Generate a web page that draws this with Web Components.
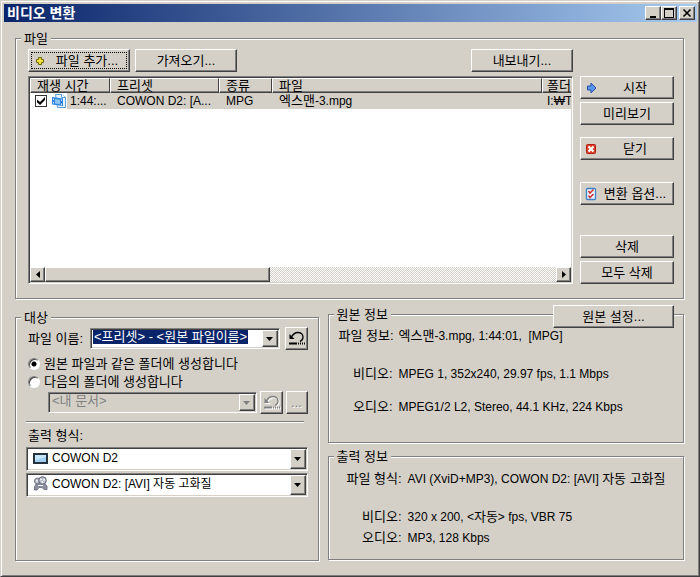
<!DOCTYPE html>
<html lang="ko">
<head>
<meta charset="utf-8">
<title>비디오 변환</title>
<style>
  :root {
    --face: #d4d0c8; --shade: #808080; --dark: #404040; --light: #fff; --navy: #0a246a;
  }
  body { margin: 0; background: var(--face); color: #000; font: 13px/16px "Liberation Sans", "Noto Sans CJK KR", sans-serif; }
</style>
</head>
<body>
<convert-window></convert-window>

<template id="t-window">
  <style>
    :host { display: flex; flex-direction: column; box-sizing: border-box; min-height: 100vh; padding: 2px 0 0 2px;
      border: 1px solid; border-color: var(--face) var(--dark) var(--dark) var(--face);
      box-shadow: inset 1px 1px 0 #fff, inset -1px -1px 0 var(--shade); }
    main { flex: 1; display: flex; flex-direction: column; padding: 9px 15px 15px 12px; }
    .files { flex: 1; display: flex; flex-direction: column; }
    .files-grid { flex: 1; display: grid; grid-template-columns: minmax(0, 1fr) 94px; grid-template-rows: 22px 1fr; gap: 5px 7px; padding: 3px 9px 14px 12px; }
    .bar { display: flex; gap: 5px; }
    .bar push-button { width: 102px; }
    .bar .end { margin-left: auto; }
    .side { grid-column: 2; grid-row: 2; display: flex; flex-direction: column; gap: 3px; }
    .side .gap { margin-top: 9px; }
    .side .gap2 { margin-top: 19px; }
    .side .push { margin-top: auto; }
    .lower { display: grid; grid-template-columns: minmax(0, 304fr) minmax(0, 357fr); gap: 9px; padding-top: 8px; }
    .target { margin-top: 3px; }
    .target-in { padding: 2px 10px 63px; }
    .row { display: flex; align-items: center; gap: 5px; padding-left: 2px; }
    .row label { flex: none; width: 57px; }
    .row edit-combo { flex: 1; }
    .row.sub { padding-left: 22px; gap: 3px; }
    radio-list { margin: 5px 0 0 2px; }
    hr { margin: 7px 4px 5px 0; border: 0; border-top: 1px solid var(--shade); border-bottom: 1px solid #fff; }
    .fmt { padding-left: 2px; margin-bottom: 3px; }
    pick-list + pick-list { margin-top: 2px; }
    .right { display: flex; flex-direction: column; gap: 6px; }
    .source { position: relative; }
    .source > push-button { position: absolute; z-index: 1; right: 10px; top: -2px; width: 121px; }
    .right info-table { padding: 6px 8px 27px 10px; }
    .right .out { padding: 7px 8px 13px 16px; }
  </style>
  <title-bar>비디오 변환</title-bar>
  <main>
    <group-box class="files" label="파일">
      <div class="files-grid">
        <div class="bar">
          <push-button focused>
            <svg slot="icon" width="16" height="16" viewBox="0 0 16 16"><path d="M6.500 4.500h3v2h2v3h-2v2h-3v-2h-2v-3h2z" fill="#f4e23c" stroke="#6b6510"/></svg>
            파일 추가...</push-button>
          <push-button>가져오기...</push-button>
          <push-button class="end">내보내기...</push-button>
        </div>
        <file-list style="grid-row:2"></file-list>
        <div class="side">
          <push-button>
            <svg slot="icon" width="16" height="16" viewBox="0 0 16 16"><path d="M3.500 6h3.500v-3l5 5-5 5v-3h-3.500z" fill="#5b94f0" stroke="#2450a8"/></svg>
            시작</push-button>
          <push-button>미리보기</push-button>
          <push-button class="gap">
            <svg slot="icon" width="16" height="16" viewBox="0 0 16 16"><rect x="2.500" y="3.500" width="9" height="9" rx="1" fill="#e0402c" stroke="#b01c10"/><path d="M4.500 5.500l5 5m0-5l-5 5" stroke="#fff" stroke-width="2.200"/></svg>
            닫기</push-button>
          <push-button class="gap2">
            <svg slot="icon" width="16" height="16" viewBox="0 0 16 16"><rect x="2.500" y="2.500" width="9" height="11" rx="1" fill="#eaf4ff" stroke="#3c82c8" stroke-width="1.300"/><path d="M4.500 5l1.500 2 3.500-3.500M4.500 9.500l1.500 2L9.500 8" fill="none" stroke="#d03030" stroke-width="1.500"/></svg>
            변환 옵션...</push-button>
          <push-button class="push">삭제</push-button>
          <push-button>모두 삭제</push-button>
        </div>
      </div>
    </group-box>
    <div class="lower">
      <group-box class="target" label="대상">
        <div class="target-in">
          <div class="row"><label>파일 이름:</label>
            <edit-combo label="파일 이름" value="&lt;프리셋&gt; - &lt;원본 파일이름&gt;"></edit-combo>
            <undo-button></undo-button></div>
          <radio-list></radio-list>
          <div class="row sub">
            <edit-combo label="폴더" value="&lt;내 문서&gt;" disabled></edit-combo>
            <undo-button disabled></undo-button>
            <push-button square disabled style="width:22px">...</push-button></div>
          <hr>
          <div class="fmt">출력 형식:</div>
          <pick-list label="기기" options="COWON D2">
            <svg width="16" height="16" viewBox="0 0 16 16"><rect x="0" y="3" width="15" height="11" fill="#26323e"/><rect x="2" y="5" width="11" height="7" fill="#a0d0f4"/><path d="M2 5h11v2L2 10z" fill="#c8e6fa"/></svg>
          </pick-list>
          <pick-list label="출력 형식" options="COWON D2: [AVI] 자동 고화질">
            <svg width="16" height="16" viewBox="0 0 16 16"><circle cx="4.500" cy="5" r="3" fill="#b4b8c0" stroke="#74788a"/><circle cx="9.500" cy="4.500" r="3.800" fill="#b4b8c4" stroke="#60647a"/><path d="M3 8h9l2 2v3.500h-3l-2-2H6L4 14H1.500v-3z" fill="#8c909c" stroke="#74788a"/><g fill="#f4f6fa"><circle cx="4" cy="5" r="1"/><circle cx="8" cy="3.500" r="1"/><circle cx="11" cy="3.800" r="1"/><circle cx="9.500" cy="6.300" r="1"/><path d="M5 9h5v1H5z"/></g></svg>
          </pick-list>
        </div>
      </group-box>
      <div class="right">
        <div class="source">
          <group-box label="원본 정보"><info-table id="src"></info-table></group-box>
          <push-button>원본 설정...</push-button>
        </div>
        <group-box label="출력 정보"><info-table id="out" class="out"></info-table></group-box>
      </div>
    </div>
  </main>
</template>

<template id="t-title">
  <style>
    :host { display: flex; align-items: center; height: 18px; margin: 1px 2px 0 1px; padding: 0 2px 0 3px; color: #fff; font-size: 14px; font-weight: 700;
      background: linear-gradient(90deg, #0a246a, #a6caf0); }
    h1 { flex: 1; margin: 0; font: inherit; }
    button { box-sizing: border-box; width: 16px; height: 14px; padding: 0; border: 1px solid; border-color: #fff var(--dark) var(--dark) #fff; background: var(--face); box-shadow: inset -1px -1px 0 var(--shade); }
    button:last-child { margin-left: 2px; }
    svg { display: block; margin: auto; }
  </style>
  <h1><slot></slot></h1>
  <button aria-label="최소화"><svg width="12" height="10"><path d="M3 8h6v2H3z"/></svg></button>
  <button aria-label="최대화"><svg width="12" height="10"><path d="M1 0h10v10H1zM2 2v7h8V2z" fill-rule="evenodd"/></svg></button>
  <button aria-label="닫기"><svg width="12" height="10"><path d="M2.500 1.500l7 7m0-7l-7 7" stroke="#000" stroke-width="1.600"/></svg></button>
</template>

<template id="t-group">
  <style>
    :host { display: block; }
    fieldset { flex: 1; display: flex; flex-direction: column; box-sizing: border-box; width: 100%; min-width: 0; margin: 0; padding: 0; border: 1px solid var(--shade); box-shadow: 1px 1px 0 #fff, inset 1px 1px 0 #fff; }
    legend { margin-left: 5px; padding: 0 3px; line-height: 15px; background: var(--face); }
    ::slotted(*) { flex: 1; }
  </style>
  <fieldset><legend></legend><slot></slot></fieldset>
</template>

<template id="t-push">
  <style>
    :host { display: block; height: 23px; }
    button { position: relative; box-sizing: border-box; display: flex; align-items: center; width: 100%; height: 100%; padding: 0 3px; border: 1px solid; border-color: #fff var(--dark) var(--dark) #fff;
      background: var(--face); box-shadow: inset -1px -1px 0 var(--shade); font: inherit; color: inherit; white-space: nowrap; }
    .text { flex: 1; text-align: center; }
    button:disabled { color: var(--shade); text-shadow: 1px 1px 0 #fff; }
    :host([focused]) button::after { content: ""; position: absolute; inset: 2px; border: 1px dotted #000; }
    :host([square]) button { padding: 0; }
    ::slotted(svg) { flex: none; }
  </style>
  <button><slot name="icon"></slot><span class="text"><slot></slot></span></button>
</template>

<template id="t-undo">
  <style>
    :host { display: block; flex: none; width: 23px; height: 23px; }
    button { box-sizing: border-box; display: block; width: 100%; height: 100%; padding: 0; border: 1px solid; border-color: #fff var(--dark) var(--dark) #fff; background: var(--face); box-shadow: inset -1px -1px 0 var(--shade); color: #000; }
    button:disabled { color: var(--shade); }
    button:disabled svg { filter: drop-shadow(1px 1px 0 #fff); }
    svg { display: block; margin: auto; }
  </style>
  <button aria-label="되돌리기"><svg width="19" height="19" viewBox="0 0 19 19" fill="none" stroke="currentColor" stroke-width="1.300"><path d="M4 8.500C6 5 8.500 3.500 11 3.500c3 0 5 2 5 4.500 0 2-1 3.500-3 4.500"/><path d="M2.500 5v5h5z" fill="currentColor" stroke="none"/><path d="M2 14.500h8" stroke-width="2"/><path d="M11 14.500h1m1 0h1m1 0h1m1 0h1" stroke-width="2"/></svg></button>
</template>

<template id="t-edit">
  <style>
    :host { display: block; min-width: 0; }
    .box { box-sizing: border-box; display: flex; height: 21px; border: 1px solid; border-color: var(--shade) #fff #fff var(--shade); background: #fff; box-shadow: inset 1px 1px 0 var(--dark), inset -1px -1px 0 var(--face); padding: 1px; }
    .field { flex: 1; min-width: 0; padding-left: 1px; overflow: hidden; }
    input { display: block; field-sizing: content; box-sizing: border-box; height: 14px; margin: 0; padding: 0 1px; border: 0; background: var(--navy); color: #fff; font: inherit; line-height: 14px; outline: 0; }
    button { flex: none; width: 16px; padding: 0; border: 1px solid; border-color: #fff var(--dark) var(--dark) #fff; background: var(--face); box-shadow: inset -1px -1px 0 var(--shade); color: #000; }
    svg { display: block; margin: auto; }
    :host([disabled]) .box { background: var(--face); }
    :host([disabled]) input { background: none; color: var(--shade); }
    :host([disabled]) button { color: var(--shade); }
  </style>
  <div class="box"><div class="field"><input type="text"></div><button aria-label="목록 열기"><svg width="7" height="4"><path d="M0 0h7L3.500 4z" fill="currentColor"/></svg></button></div>
</template>

<template id="t-radio">
  <style>
    :host { display: block; }
    label { display: flex; align-items: center; gap: 4px; height: 18px; white-space: nowrap; }
    input { appearance: none; box-sizing: border-box; flex: none; width: 12px; height: 12px; margin: 0; border: 1px solid; border-color: var(--shade) #fff #fff var(--shade); border-radius: 50%; background: #fff; box-shadow: inset 1px 1px 0 var(--dark); }
    input:checked { background: radial-gradient(circle at 5px 5px, #000 2px, #fff 3px); }
  </style>
  <label><input type="radio" name="dest" checked>원본 파일과 같은 폴더에 생성합니다</label>
  <label><input type="radio" name="dest">다음의 폴더에 생성합니다</label>
</template>

<template id="t-pick">
  <style>
    :host { position: relative; display: block; }
    select { appearance: none; box-sizing: border-box; display: block; width: 100%; height: 24px; margin: 0; padding: 0 20px 2px 25px; border: 1px solid; border-color: var(--shade) #fff #fff var(--shade); border-radius: 0; background: #fff; box-shadow: inset 1px 1px 0 var(--dark), inset -1px -1px 0 var(--face); color: #000; font: inherit; font-size: 12px; }
    ::slotted(svg) { position: absolute; left: 7px; top: 3px; pointer-events: none; }
    .arrow { position: absolute; right: 2px; top: 2px; bottom: 2px; width: 16px; box-sizing: border-box; display: flex; align-items: center; justify-content: center; pointer-events: none; border: 1px solid; border-color: #fff var(--dark) var(--dark) #fff; background: var(--face); box-shadow: inset -1px -1px 0 var(--shade); }
  </style>
  <select></select><slot></slot>
  <span class="arrow"><svg width="7" height="4"><path d="M0 0h7L3.500 4z"/></svg></span>
</template>

<template id="t-list">
  <style>
    :host { display: flex; flex-direction: column; box-sizing: border-box; min-height: 208px; border: 1px solid; border-color: var(--shade) #fff #fff var(--shade); background: #fff; box-shadow: inset 1px 1px 0 var(--dark), inset -1px -1px 0 var(--face); padding: 1px; }
    .view { flex: 1; overflow: hidden; }
    table { width: 100%; table-layout: fixed; border-collapse: separate; border-spacing: 0; }
    th, td { box-sizing: border-box; padding: 0 0 0 6px; overflow: hidden; white-space: nowrap; text-align: left; font-weight: 400; }
    th { height: 15px; line-height: 13px; background: var(--face); border: 1px solid; border-color: #fff var(--dark) var(--dark) #fff; box-shadow: inset 0 -1px 0 var(--shade); }
    th:last-child { border-right: 0; padding-left: 4px; }
    td { height: 16px; line-height: 16px; padding-left: 7px; background: var(--face); font-size: 12px; }
    td b { font-weight: 400; font-size: 13px; }
    td:first-child { padding: 0; }
    td:last-child { padding-left: 5px; }
    .first { display: flex; align-items: center; }
    .marks { display: flex; align-items: center; gap: 5px; width: 37px; height: 16px; padding-left: 5px; box-sizing: border-box; background: #fff; }
    .first span { padding-left: 3px; }
    input { appearance: none; position: relative; box-sizing: border-box; flex: none; width: 12px; height: 12px; margin: 0; border: 1px solid #333; background: #fff; }
    input:checked::before { content: ""; position: absolute; left: 1px; top: 1px; width: 8px; height: 8px; background: #000; clip-path: polygon(0 30%, 38% 62%, 100% 0, 100% 36%, 38% 100%, 0 66%); }
    svg { display: block; flex: none; }
    .scroll { display: flex; height: 15px; background: repeating-conic-gradient(#fff 0 25%, var(--face) 0 50%) 0 0 / 2px 2px; }
    .scroll button, .thumb { box-sizing: border-box; border: 1px solid; border-color: #fff var(--dark) var(--dark) #fff; background: var(--face); box-shadow: inset -1px -1px 0 var(--shade); }
    .scroll button { flex: none; width: 15px; padding: 0; }
    .scroll button svg { margin: auto; }
    .track { flex: 1; }
    .thumb { width: 44%; height: 100%; }
  </style>
  <div class="view"><table>
    <colgroup><col style="width:80px"><col style="width:109px"><col style="width:53px"><col><col style="width:29px"></colgroup>
    <thead><tr><th>재생 시간</th><th>프리셋</th><th>종류</th><th>파일</th><th>폴더</th></tr></thead>
    <tbody><tr>
      <td><div class="first"><div class="marks"><input type="checkbox" checked aria-label="엑스맨-3.mpg"><svg width="14" height="14" viewBox="0 0 14 14"><path d="M3.500.5h6l4 3v10h-8z" fill="#e8f4ff" stroke="#5b9ee0"/><path d="M9.500.5v3h4" fill="#fff" stroke="#5b9ee0"/><path d="M0 3l11 1.500v7.500L0 10.500z" fill="#2f86de"/><path d="M1.500 4.500V6m0 2v1.500M9.500 5.500V7m0 2.500V11" stroke="#cfe8ff"/><path d="M3 5l5 .7v4.500L3 9.500z" fill="#8cc4f8"/></svg></div><span>1:44:...</span></div></td>
      <td>COWON D2: [A...</td><td>MPG</td><td><b>엑스맨</b>-3.mpg</td><td>I:₩T</td>
    </tr></tbody>
  </table></div>
  <div class="scroll">
    <button aria-label="왼쪽"><svg width="4" height="7"><path d="M4 0v7L0 3.500z"/></svg></button>
    <div class="track"><div class="thumb"></div></div>
    <button aria-label="오른쪽"><svg width="4" height="7"><path d="M0 0v7l4-3.500z"/></svg></button>
  </div>
</template>

<template id="t-src">
  <style>
    dl { display: grid; grid-template-columns: 54px minmax(0, 1fr); column-gap: 6px; margin: 0; white-space: nowrap; }
    dt { text-align: right; }
    dd { margin: 0; font-size: 12px; }
    b { font-weight: 400; font-size: 13px; }
    .a { margin-top: 22px; } .b { margin-top: 17px; }
  </style>
  <dl><dt>파일 정보:</dt><dd><b>엑스맨</b>-3.mpg, 1:44:01, &nbsp;[MPG]</dd>
  <dt class="a">비디오:</dt><dd class="a">MPEG 1, 352x240, 29.97 fps, 1.1 Mbps</dd>
  <dt class="b">오디오:</dt><dd class="b">MPEG1/2 L2, Stereo, 44.1 KHz, 224 Kbps</dd></dl>
</template>
<template id="t-out">
  <style>
    dl { display: grid; grid-template-columns: 57px minmax(0, 1fr); column-gap: 6px; margin: 0; white-space: nowrap; }
    dt { text-align: right; }
    dd { margin: 0; font-size: 12px; }
    b { font-weight: 400; font-size: 13px; }
    .a { margin-top: 22px; } .b { margin-top: 5px; }
  </style>
  <dl><dt>파일 형식:</dt><dd>AVI (XviD+MP3), COWON D2: [AVI] <b>자동 고화질</b></dd>
  <dt class="a">비디오:</dt><dd class="a">320 x 200, &lt;<b>자동</b>&gt; fps, VBR 75</dd>
  <dt class="b">오디오:</dt><dd class="b">MP3, 128 Kbps</dd></dl>
</template>

<script>
  class Base extends HTMLElement {
    connectedCallback() {
      if (this.shadowRoot) return;
      const root = this.attachShadow({ mode: "open" });
      root.append(document.getElementById(this.templateId).content.cloneNode(true));
      this.setup(root);
    }
    get templateId() { return this.constructor.template; }
    setup() {}
  }
  const define = (name, template, setup) => customElements.define(name, class extends Base {
    static template = template;
    setup(root) { if (setup) setup(this, root); }
  });
  define("title-bar", "t-title");
  define("group-box", "t-group", (el, root) => {
    root.querySelector("legend").textContent = el.getAttribute("label");
  });
  const disable = (el, root) => root.querySelectorAll("button, input").forEach(c => c.disabled = el.hasAttribute("disabled"));
  define("push-button", "t-push", disable);
  define("undo-button", "t-undo", disable);
  define("edit-combo", "t-edit", (el, root) => {
    const input = root.querySelector("input");
    input.value = el.getAttribute("value");
    input.setAttribute("aria-label", el.getAttribute("label"));
    disable(el, root);
  });
  define("radio-list", "t-radio");
  define("pick-list", "t-pick", (el, root) => {
    const select = root.querySelector("select");
    select.setAttribute("aria-label", el.getAttribute("label"));
    select.add(new Option(el.getAttribute("options")));
  });
  define("file-list", "t-list");
  customElements.define("info-table", class extends Base {
    get templateId() { return "t-" + this.id; }
    setup(root) {
      const s = document.createElement("style");
      s.textContent = ":host { display: block; }";
      root.prepend(s);
    }
  });
  define("convert-window", "t-window");
</script>
</body>
</html>
